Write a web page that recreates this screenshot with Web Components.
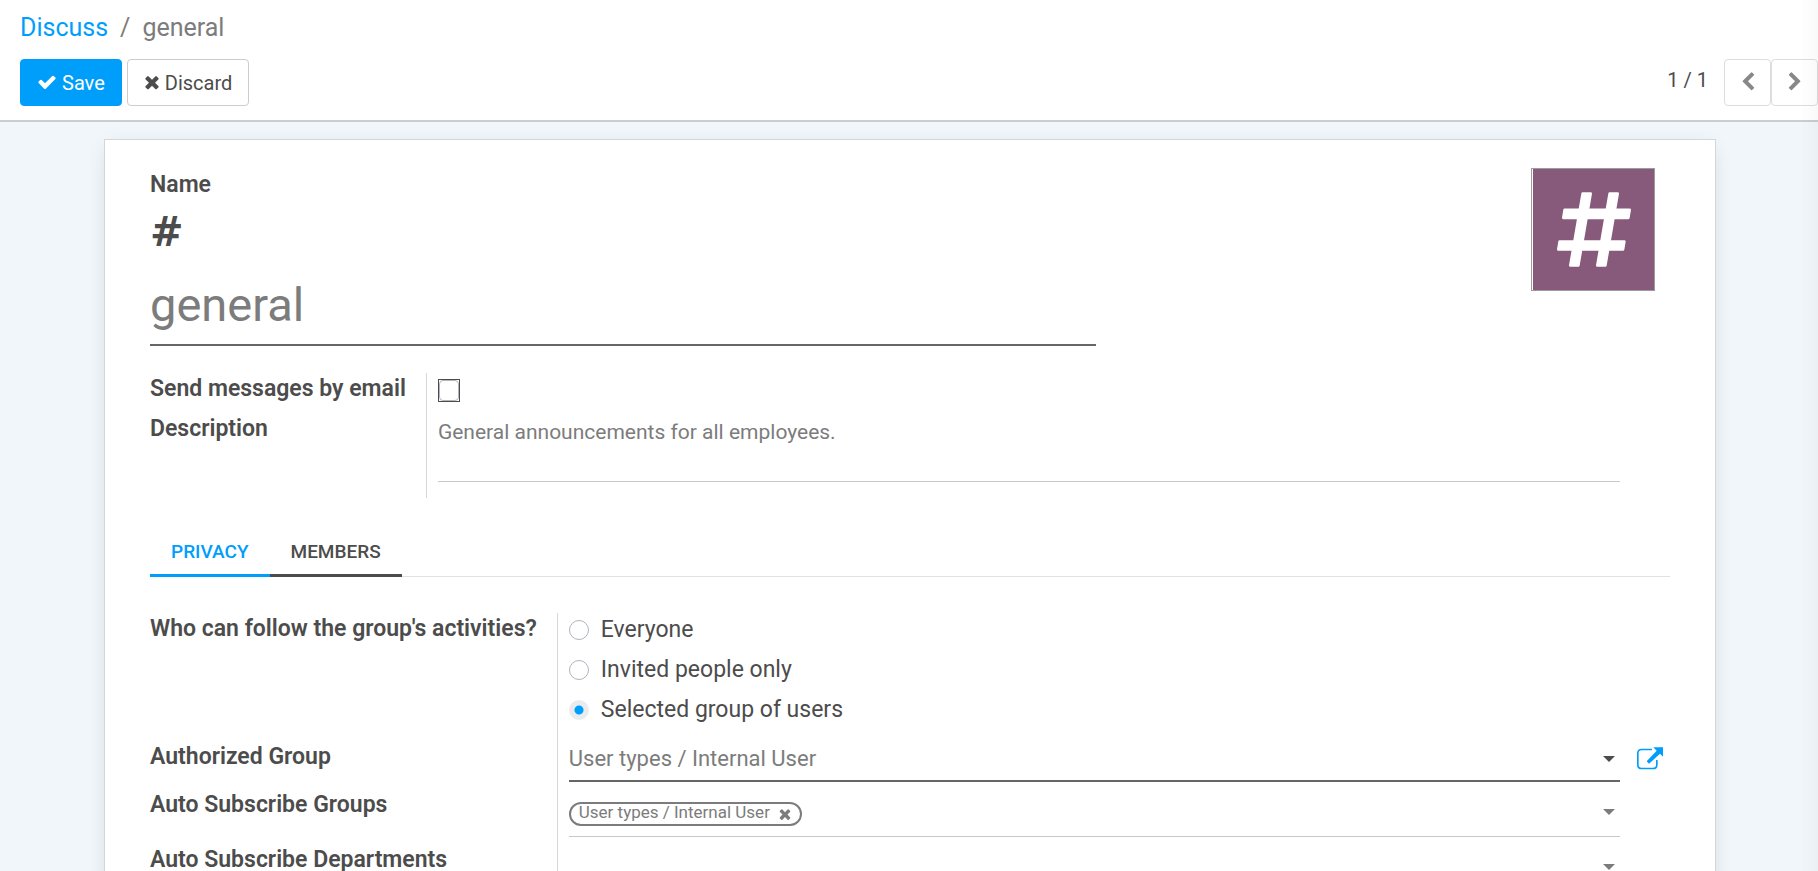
<!DOCTYPE html>
<html lang="en">
<head>
<meta charset="utf-8">
<title>general - Discuss</title>
<style>
  html, body { margin: 0; height: 100%; }
  body {
    --text: #4c4c4c;
    --muted: #7c7c7c;
    --primary: #009efb;
    --line: #c8c8c8;
    --strong: #666;
    color: var(--text);
    background: #fff;
    font-family: Roboto, "Liberation Sans", sans-serif;
    font-size: 23px;
    line-height: 28px;
  }
</style>
</head>
<body>
<channel-app>
  <control-panel slot="header"></control-panel>
  <form-sheet>
    <channel-title></channel-title>
    <form-group>
      <check-field label="Send messages by email"></check-field>
      <text-field label="Description" value="General announcements for all employees."></text-field>
    </form-group>
    <tab-bar></tab-bar>
    <form-group>
      <radio-field label="Who can follow the group's activities?" options="Everyone|Invited people only|Selected group of users" selected="2"></radio-field>
      <select-field label="Authorized Group" value="User types / Internal User"></select-field>
      <tags-field label="Auto Subscribe Groups" tags="User types / Internal User"></tags-field>
      <tags-field label="Auto Subscribe Departments"></tags-field>
    </form-group>
  </form-sheet>
</channel-app>

<script>
const ICONS = {
  check: ['0 0 1792 1792', 20, 20, '<path d="M1671 566q0 40-28 68l-724 724-136 136q-28 28-68 28t-68-28l-136-136-362-362q-28-28-28-68t28-68l136-136q28-28 68-28t68 28l294 295 656-657q28-28 68-28t68 28l136 136q28 28 28 68z"/>'],
  times: ['192 0 1408 1792', 16, 20, '<path d="M1490 1322q0 40-28 68l-136 136q-28 28-68 28t-68-28l-294-294-294 294q-28 28-68 28t-68-28l-136-136q-28-28-28-68t28-68l294-294-294-294q-28-28-28-68t28-68l136-136q28-28 68-28t68 28l294 294 294-294q28-28 68-28t68 28l136 136q28 28 28 68t-28 68l-294 294 294 294q28 28 28 68z"/>'],
  left: ['0 0 1792 1792', 20, 20, '<path d="M1427 301l-531 531 531 531q19 19 19 45t-19 45l-166 166q-19 19-45 19t-45-19l-742-742q-19-19-19-45t19-45l742-742q19-19 45-19t45 19l166 166q19 19 19 45t-19 45z"/>'],
  right: ['0 0 1792 1792', 20, 20, '<path d="M1363 877l-742 742q-19 19-45 19t-45-19l-166-166q-19-19-19-45t19-45l531-531-531-531q-19-19-19-45t19-45l166-166q19-19 45-19t45 19l742 742q19 19 19 45t-19 45z"/>'],
  caret: ['0 0 12 6', 12, 6, '<path d="M0 0h12L6 6z"/>'],
  external: ['0 0 78 69', 26, 23, '<path d="M45 7.500H14Q2.500 7.500 2.500 19V53Q2.500 64.500 14 64.500H48Q59.500 64.500 59.500 53V39" fill="none" stroke="currentColor" stroke-width="5"/><path d="M49 1H78V29L69 20L36 50L29 43L59 11Z"/>'],
  hash: ['0 0 222 224', 74, 75, '<g stroke="currentColor" stroke-width="8" stroke-linejoin="round"><path d="M77 4H101L64 220H40ZM158 4H182L145 220H121Z"/><path d="M23 53H218L214 77H19ZM8 148H202L198 172H4Z"/></g>']
};
const icon = (name) => {
  const [box, w, h, body] = ICONS[name];
  return `<svg viewBox="${box}" width="${w}" height="${h}" fill="currentColor" aria-hidden="true">${body}</svg>`;
};

class BaseElement extends HTMLElement {
  connectedCallback() {
    if (this.shadowRoot) return;
    this.attachShadow({ mode: 'open' }).innerHTML =
      `<style>*{box-sizing:border-box}svg{display:block;flex:none}button,input,select,textarea{font:inherit;color:inherit;margin:0}${this.styles()}</style>${this.render()}`;
  }
  styles() { return ''; }
  render() { return '<slot></slot>'; }
}

customElements.define('channel-app', class extends BaseElement {
  styles() { return `
    :host { display: flex; flex-direction: column; height: 100vh; position: relative; }
    main { flex: 1; min-height: 0; overflow-y: auto; scrollbar-width: none; background: #f1f6fb; padding: 17px 102px 24px 104px; }
    :host::after { content: ""; position: absolute; inset: 0 0 0 auto; width: 18px; pointer-events: none;
      background: linear-gradient(to right, transparent, rgba(0,0,0,.025)); }`; }
  render() { return '<slot name="header"></slot><main><slot></slot></main>'; }
});

customElements.define('icon-button', class extends BaseElement {
  styles() { return `
    :host { display: block; }
    button { display: flex; align-items: center; justify-content: center; gap: 5px; height: 47px; padding: 0 16px;
      font-size: 20px; border: 1px solid #ccc; border-radius: 4px; background: #fff; }
    :host([primary]) button { background: var(--primary); border-color: var(--primary); color: #fff; }
    :host([square]) button { width: 47px; padding: 0; border-color: #ddd; color: #888; }
    svg { margin-bottom: 1px; }`; }
  render() {
    const label = this.getAttribute('label');
    return `<button type="button"${label ? ` aria-label="${label}"` : ''}>${icon(this.getAttribute('icon'))}${label ? '' : '<slot></slot>'}</button>`;
  }
});

customElements.define('control-panel', class extends BaseElement {
  styles() { return `
    :host { display: block; flex: none; padding: 10px 0 14px 20px; background: #fff; border-bottom: 2px solid #c9ccd0; }
    nav { display: flex; gap: 12px; font-size: 25px; line-height: 36px; color: var(--muted); }
    a { color: var(--primary); text-decoration: none; }
    .bar { display: flex; justify-content: space-between; margin-top: 13px; }
    .actions { display: flex; gap: 5px; }
    .pager { display: flex; }
    .count { font-size: 20px; line-height: 42px; margin-right: 16px; }`; }
  render() { return `
    <nav aria-label="Breadcrumb"><a href="#">Discuss</a><span>/</span><span>general</span></nav>
    <div class="bar">
      <div class="actions"><icon-button icon="check" primary>Save</icon-button><icon-button icon="times">Discard</icon-button></div>
      <div class="pager"><span class="count">1 / 1</span><icon-button icon="left" label="Previous" square></icon-button><icon-button icon="right" label="Next" square></icon-button></div>
    </div>`; }
});

customElements.define('form-sheet', class extends BaseElement {
  styles() { return `
    :host { display: block; background: #fff; border: 1px solid #d3d6da; padding: 28px 45px 48px;
      box-shadow: 0 5px 20px -5px rgba(0,0,0,.15); }`; }
});

customElements.define('channel-title', class extends BaseElement {
  styles() { return `
    :host { display: flex; justify-content: space-between; align-items: flex-start; margin-bottom: 27px; }
    .title { width: calc(100% - 574px); padding-top: 3px; }
    label { display: block; font-weight: 600; }
    .prefix { font-family: "DejaVu Sans", sans-serif; font-size: 40px; font-weight: 700; line-height: 52px; margin: 7px 0 18px; }
    input { display: block; width: 100%; height: 70px; padding: 0 0 12px; border: 0; border-bottom: 2px solid var(--strong);
      background: none; outline: 0; font-size: 47px; line-height: 56px; color: var(--muted); }
    .image { display: flex; border: 1px solid #9b9b9b; padding: 0 0 0 1px; margin-right: 15px; background: #fff; }
    .image div { display: flex; align-items: center; justify-content: center; width: 121px; height: 121px; background: #875a7b; color: #fff; }`; }
  render() { return `
    <div class="title"><label for="name">Name</label><div class="prefix">#</div><input id="name" type="text" value="general"></div>
    <div class="image"><div>${icon('hash')}</div></div>`; }
});

customElements.define('form-group', class extends BaseElement {
  styles() { return ':host { display: grid; grid-template-columns: max-content 1fr; }'; }
});

/* A label and its value share the two columns of the surrounding form-group. */
class FieldElement extends BaseElement {
  get label() { return this.getAttribute('label'); }
  styles() { return `
    :host { display: grid; grid-column: 1 / -1; grid-template-columns: subgrid; }
    .label { font-weight: 600; padding: 2px 20px 0 0; }
    .value { display: flex; align-items: flex-start; padding: 0 50px 0 11px; border-left: 1px solid #d8d8d8; }
    ${this.fieldStyles()}`; }
  render() { return `<label class="label" for="field">${this.label}</label><div class="value">${this.control()}</div>`; }
}

customElements.define('check-field', class extends FieldElement {
  fieldStyles() { return `
    .value { height: 40px; }
    .box { display: flex; margin-top: 6px; border: 1px solid var(--text); }
    input { appearance: none; width: 20px; height: 21px; border: 1px solid #adb5bd; border-radius: 4px; }`; }
  control() { return '<span class="box"><input id="field" type="checkbox"></span>'; }
});

customElements.define('text-field', class extends FieldElement {
  fieldStyles() { return `
    .value { height: 85px; }
    textarea { width: 100%; height: 69px; padding: 5px 0 0; border: 0; border-bottom: 1px solid var(--line); border-radius: 0; resize: none;
      outline: 0; background: none; font-size: 21px; color: var(--muted); }`; }
  control() { return `<textarea id="field">${this.getAttribute('value')}</textarea>`; }
});

customElements.define('radio-field', class extends FieldElement {
  fieldStyles() { return `
    .value { flex-direction: column; gap: 12px; padding-top: 3px; padding-bottom: 17px; }
    .value label { display: flex; align-items: center; gap: 12px; }
    input { appearance: none; width: 20px; height: 20px; border: 1px solid #adb5bd; border-radius: 50%; }
    input:checked { border-color: #e9ecef; background: radial-gradient(circle, var(--primary) 4px, #e9ecef 5px); }`; }
  control() {
    const selected = Number(this.getAttribute('selected'));
    return this.getAttribute('options').split('|').map((text, i) =>
      `<label><input type="radio" name="choice"${i === selected ? ' checked' : ''}>${text}</label>`).join('');
  }
  render() { return `<span class="label" id="caption">${this.label}</span><div class="value" role="radiogroup" aria-labelledby="caption">${this.control()}</div>`; }
});

customElements.define('select-field', class extends FieldElement {
  fieldStyles() { return `
    .value { position: relative; height: 48px; }
    .wrap { position: relative; flex: 1; }
    select { display: block; appearance: none; width: 100%; height: 41px; padding: 0 24px 4px 0; border: 0; border-bottom: 2px solid var(--strong);
      border-radius: 0; background: none; outline: 0; font-size: 22px; color: var(--muted); }
    .wrap svg { position: absolute; right: 5px; top: 15px; pointer-events: none; }
    button { position: absolute; right: 7px; top: 6px; padding: 0; border: 0; background: none; color: var(--primary); }`; }
  control() { return `<div class="wrap"><select id="field"><option>${this.getAttribute('value')}</option></select>${icon('caret')}</div>
    <button type="button" aria-label="External link">${icon('external')}</button>`; }
});

customElements.define('tags-field', class extends FieldElement {
  fieldStyles() { return `
    .value { height: 55px; }
    .wrap { position: relative; display: flex; flex: 1; height: 48px; padding-top: 13px; border-bottom: 1px solid var(--line); color: var(--muted); }
    .tag { display: flex; flex: none; gap: 8px; height: 24px; padding: 0 8px; border: 2px solid var(--muted); border-radius: 12px; font-size: 17px; line-height: 16px; }
    .tag button { display: block; height: 18px; padding: 1px 0 0; border: 0; background: none; }
    .tag svg { width: 14px; height: 16px; }
    input { flex: 1; min-width: 0; height: 24px; padding: 0; border: 0; outline: 0; background: none; font-size: 21px; }
    .wrap > svg { position: absolute; right: 5px; top: 20px; }`; }
  control() {
    const tags = (this.getAttribute('tags') || '').split('|').filter(Boolean);
    return `<div class="wrap">${tags.map(t => `<span class="tag">${t}<button type="button" aria-label="Delete">${icon('times')}</button></span>`).join('')}<input id="field" type="text">${icon('caret')}</div>`;
  }
});

customElements.define('tab-bar', class extends BaseElement {
  styles() { return `
    :host { display: flex; margin: 32px 0 36px; border-bottom: 1px solid #dee2e6; }
    button { margin-bottom: -1px; padding: 10px 21px; border: 0; border-bottom: 3px solid var(--text); background: none;
      font-size: 19px; font-weight: 500; line-height: 24px; text-transform: uppercase; }
    button[aria-selected="true"] { color: var(--primary); border-color: var(--primary); }`; }
  render() { return '<button type="button" role="tab" aria-selected="true">Privacy</button><button type="button" role="tab" aria-selected="false">Members</button>'; }
});
</script>
</body>
</html>
